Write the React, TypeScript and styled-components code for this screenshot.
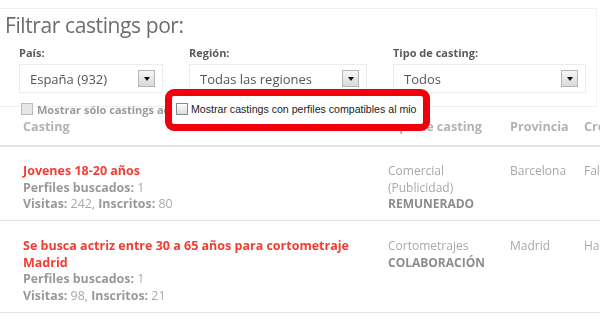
import React from "react";
import styled, { createGlobalStyle } from "styled-components";

const Global = createGlobalStyle`
  html, body { margin: 0; padding: 0; background: #fff; }
  body { width: 600px; height: 323px; overflow: hidden; font-family: "Open Sans", "DejaVu Sans", sans-serif; }
  #root { position: relative; width: 600px; height: 323px; overflow: hidden; }
`;

const Page = styled.div`
  position: relative;
  width: 600px;
  height: 323px;
  overflow: hidden;
  filter: blur(0.6px);
`;

const Panel = styled.section`
  margin-top: 8px;
  margin-right: 3px;
  height: 97px;
  border-top: 1px solid #efefef;
  border-right: 1px solid #f2f2f2;
  border-bottom: 1px solid #f0f0f0;
`;

const Title = styled.h1`
  margin: 0;
  padding: 3px 0 0 5px;
  font-family: "Open Sans", sans-serif;
  font-weight: 400;
  font-size: 21px;
  line-height: 26px;
  letter-spacing: -0.4px;
  color: #6d6d6d;
`;

const Filters = styled.div`
  display: grid;
  grid-template-columns: 144px 178px 193px;
  column-gap: 26px;
  padding: 8px 0 0 19px;
`;

const Field = styled.div`
  display: flex;
  flex-direction: column;
`;

const Label = styled.label`
  font-size: 11px;
  font-weight: 700;
  color: #5a5a5a;
  line-height: 14px;
  height: 18px;
`;

const SelectBox = styled.div`
  box-sizing: border-box;
  height: 29px;
  border: 1px solid #ececec;
  display: flex;
  align-items: center;
  justify-content: space-between;
  padding: 0 7px 0 10px;
  font-size: 13px;
  color: #555;
`;

const DropBtn = styled.span`
  box-sizing: border-box;
  width: 17px;
  height: 17px;
  border: 1px solid #b5b5b5;
  background: linear-gradient(#f6f6f6, #d9d9d9);
  display: flex;
  align-items: center;
  justify-content: center;
  &::after {
    content: "";
    border-left: 3px solid transparent;
    border-right: 3px solid transparent;
    border-top: 4px solid #111;
  }
`;

const ActiveRow = styled.div`
  display: flex;
  align-items: center;
  gap: 4px;
  margin: -5px 0 0 21px;
  height: 14px;
  font-size: 11px;
  font-weight: 700;
  color: #9a9a9a;
`;

const Box = styled.span`
  box-sizing: border-box;
  width: 12px;
  height: 12px;
  border: 1px solid #bbb;
  background: #e6e6e6;
`;

const Table = styled.div`
  width: 640px;
`;

const Columns = `
  display: grid;
  grid-template-columns: 365px 122px 74px 1fr;
  padding-left: 23px;
`;

const HeadRow = styled.div`
  ${Columns}
  height: 27px;
  margin-top: 2px;
  border-bottom: 2px solid #e3e3e3;
  font-size: 12.6px;
  font-weight: 700;
  color: #b3b3b3;
  line-height: 18px;
`;

const Row = styled.div<{ $h: number; $pt: number }>`
  ${Columns}
  height: ${(p) => p.$h}px;
  box-sizing: border-box;
  padding-top: ${(p) => p.$pt}px;
  border-bottom: 1px solid #e2e2e2;
  font-size: 12px;
  line-height: 16.6px;
`;

const CastCell = styled.div`
  padding-right: 25px;
`;

const Cell = styled.div`
  color: #a8a8a8;
`;

const CastTitle = styled.div`
  color: #f33c32;
  font-weight: 700;
  font-size: 12.5px;
`;

const Meta = styled.div`
  color: #a9a9a9;
  font-size: 12.4px;
  b { color: #999; font-weight: 700; }
`;

const Pay = styled.div`
  color: #8c8c8c;
  font-weight: 700;
`;

const Highlight = styled.div`
  position: absolute;
  left: 165px;
  top: 89px;
  width: 265px;
  height: 42px;
  box-sizing: border-box;
  border: 7px solid #f0000a;
  border-radius: 9px;
  background: #fff;
  display: flex;
  align-items: center;
  gap: 3px;
  padding: 0 0 0 4px;
  font-family: "Liberation Sans", Arial, sans-serif;
  font-size: 10.6px;
  color: #222;
  white-space: nowrap;
  overflow: hidden;
`;

const HiBox = styled.span`
  flex: none;
  box-sizing: border-box;
  width: 12px;
  height: 12px;
  margin-top: -2px;
  border: 1px solid #8a8a8a;
  background: linear-gradient(#fdfdfd, #dcdcdc);
`;

const HiText = styled.span`
  margin-top: -3px;
`;

export default function App() {
  return (
    <>
      <Global />
      <Page>
        <Panel>
          <Title>Filtrar castings por:</Title>
          <Filters>
            <Field>
              <Label>País:</Label>
              <SelectBox>España (932)<DropBtn /></SelectBox>
            </Field>
            <Field>
              <Label>Región:</Label>
              <SelectBox>Todas las regiones<DropBtn /></SelectBox>
            </Field>
            <Field>
              <Label>Tipo de casting:</Label>
              <SelectBox>Todos<DropBtn /></SelectBox>
            </Field>
          </Filters>
        </Panel>
        <ActiveRow><Box />Mostrar sólo castings activos</ActiveRow>
        <Table>
          <HeadRow>
            <span>Casting</span>
            <span>Tipo de casting</span>
            <span>Provincia</span>
            <span>Creado</span>
          </HeadRow>
          <Row $h={74} $pt={16}>
            <CastCell>
              <CastTitle>Jovenes 18-20 años</CastTitle>
              <Meta><b>Perfiles buscados:</b> 1</Meta>
              <Meta><b>Visitas:</b> 242, <b>Inscritos:</b> 80</Meta>
            </CastCell>
            <div>
              <Cell>Comercial</Cell>
              <Cell>(Publicidad)</Cell>
              <Pay>REMUNERADO</Pay>
            </div>
            <Cell>Barcelona</Cell>
            <Cell>Falta</Cell>
          </Row>
          <Row $h={92} $pt={17}>
            <CastCell>
              <CastTitle>Se busca actriz entre 30 a 65 años para cortometraje Madrid</CastTitle>
              <Meta><b>Perfiles buscados:</b> 1</Meta>
              <Meta><b>Visitas:</b> 98, <b>Inscritos:</b> 21</Meta>
            </CastCell>
            <div>
              <Cell>Cortometrajes</Cell>
              <Pay>COLABORACIÓN</Pay>
            </div>
            <Cell>Madrid</Cell>
            <Cell>Hace</Cell>
          </Row>
        </Table>
      </Page>
      <Highlight>
        <HiBox />
        <HiText>Mostrar castings con perfiles compatibles al mio</HiText>
      </Highlight>
    </>
  );
}
